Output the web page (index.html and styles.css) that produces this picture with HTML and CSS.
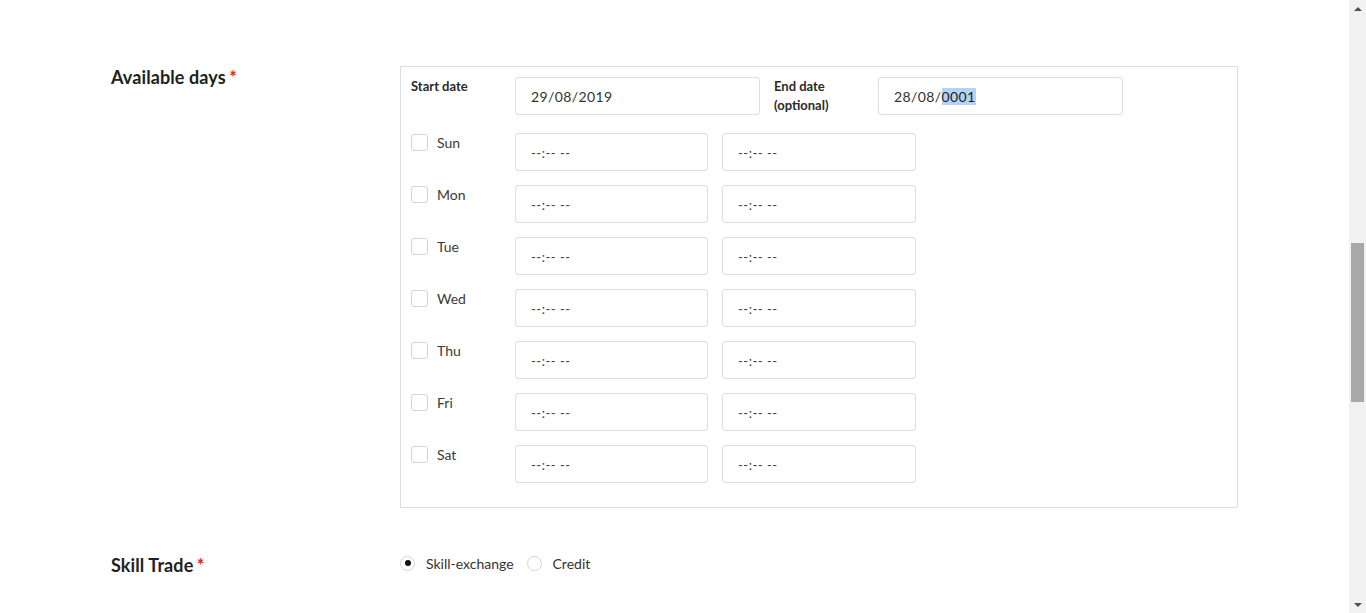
FILE: index.html
```html
<!DOCTYPE html>
<html lang="en">
<head>
<meta charset="utf-8">
<title>Available days</title>
<link rel="stylesheet" href="styles.css">
</head>
<body>
<div class="page">
  <main class="content">
    <div class="field field-days">
      <div class="field-label">Available days <span class="req">*</span></div>
      <div class="days-box">
        <div class="date-row">
          <div class="sub-label">Start date</div>
          <div class="input date">29/08/2019</div>
          <div class="sub-label end">End date<br>(optional)</div>
          <div class="input date">28/08/<span class="sel">0001</span></div>
        </div>
        <div class="day-row"><div class="day"><span class="cb"></span>Sun</div><div class="input time t1">--:-- --</div><div class="input time t2">--:-- --</div></div>
        <div class="day-row"><div class="day"><span class="cb"></span>Mon</div><div class="input time t1">--:-- --</div><div class="input time t2">--:-- --</div></div>
        <div class="day-row"><div class="day"><span class="cb"></span>Tue</div><div class="input time t1">--:-- --</div><div class="input time t2">--:-- --</div></div>
        <div class="day-row"><div class="day"><span class="cb"></span>Wed</div><div class="input time t1">--:-- --</div><div class="input time t2">--:-- --</div></div>
        <div class="day-row"><div class="day"><span class="cb"></span>Thu</div><div class="input time t1">--:-- --</div><div class="input time t2">--:-- --</div></div>
        <div class="day-row"><div class="day"><span class="cb"></span>Fri</div><div class="input time t1">--:-- --</div><div class="input time t2">--:-- --</div></div>
        <div class="day-row"><div class="day"><span class="cb"></span>Sat</div><div class="input time t1">--:-- --</div><div class="input time t2">--:-- --</div></div>
      </div>
    </div>
    <div class="field field-trade">
      <div class="field-label">Skill Trade <span class="req">*</span></div>
      <div class="radios">
        <div class="radio"><span class="rb checked"></span>Skill-exchange</div>
        <div class="radio"><span class="rb"></span>Credit</div>
      </div>
    </div>
  </main>
  <div class="scrollbar">
    <div class="arrow up"></div>
    <div class="track"><div class="thumb"></div></div>
    <div class="arrow down"></div>
  </div>
</div>
</body>
</html>
```
FILE: styles.css
```css
html, body {
  margin: 0;
  padding: 0;
  height: 100%;
  overflow: hidden;
  background: #fff;
}
body {
  font-family: Lato, "Open Sans", sans-serif;
  color: rgba(0, 0, 0, 0.87);
}
.page {
  display: flex;
  height: 613px;
}
.content {
  flex: 1;
  padding: 66px 0 0 111px;
}
.field {
  display: flex;
  align-items: flex-start;
}
.field-label {
  width: 289px;
  font-size: 18px;
  font-weight: 700;
  line-height: 22px;
  color: #212121;
  letter-spacing: 0.1px;
}
.req {
  color: #db2828;
  font-size: 18px;
  margin-left: -1px;
}
.days-box {
  box-sizing: border-box;
  width: 838px;
  border: 1px solid #dedede;
  padding: 10px 0 24px 10px;
}
.date-row {
  display: flex;
  align-items: flex-start;
  height: 38px;
}
.sub-label {
  width: 104px;
  font-size: 13px;
  font-weight: 700;
  line-height: 19px;
  color: #2a2a2a;
}
.sub-label.end {
  margin-left: 14px;
}
.input {
  box-sizing: border-box;
  height: 38px;
  border: 1px solid rgba(34, 36, 38, 0.15);
  border-radius: 4px;
  padding-left: 15px;
  padding-top: 1px;
  font-size: 14px;
  line-height: 36px;
  color: #333;
  background: #fff;
}
.input.date {
  width: 245px;
  letter-spacing: 0.4px;
}
.sel {
  background: #b5d3f7;
  color: #222;
}
.day-row {
  display: flex;
  align-items: flex-start;
  margin-top: 14px;
}
.date-row + .day-row {
  margin-top: 18px;
}
.day {
  width: 104px;
  display: flex;
  align-items: center;
  font-size: 14px;
  line-height: 19px;
  color: #3a3a3a;
}
.cb {
  box-sizing: border-box;
  width: 17px;
  height: 17px;
  border: 1px solid #d4d4d5;
  border-radius: 3px;
  margin-right: 9px;
}
.input.time {
  font-size: 13px;
  letter-spacing: 0.5px;
  color: #444;
}
.input.t1 { width: 193px; }
.input.t2 { width: 194px; margin-left: 14px; }
.field-trade {
  margin-top: 46px;
}
.radios {
  display: flex;
  align-items: center;
  height: 20px;
  margin-top: -1px;
}
.radio {
  display: flex;
  align-items: center;
  font-size: 14px;
  color: #333;
  margin-right: 13px;
}
.rb {
  box-sizing: border-box;
  width: 15px;
  height: 15px;
  border: 1px solid #d4d4d5;
  border-radius: 50%;
  margin-right: 11px;
  position: relative;
}
.rb.checked::after {
  content: "";
  position: absolute;
  left: 3.5px;
  top: 3.5px;
  width: 6px;
  height: 6px;
  border-radius: 50%;
  background: #111;
}
.scrollbar {
  width: 17px;
  background: #f1f1f1;
  display: flex;
  flex-direction: column;
}
.arrow {
  height: 17px;
  display: flex;
  justify-content: center;
  align-items: center;
}
.arrow.up::before {
  content: "";
  border-left: 4px solid transparent;
  border-right: 4px solid transparent;
  border-bottom: 4px solid #505050;
}
.arrow.down::before {
  content: "";
  border-left: 4px solid transparent;
  border-right: 4px solid transparent;
  border-top: 4px solid #505050;
}
.track {
  flex: 1;
  padding-top: 226px;
}
.thumb {
  margin: 0 2px;
  height: 159px;
  background: #a8a8a8;
}
```
